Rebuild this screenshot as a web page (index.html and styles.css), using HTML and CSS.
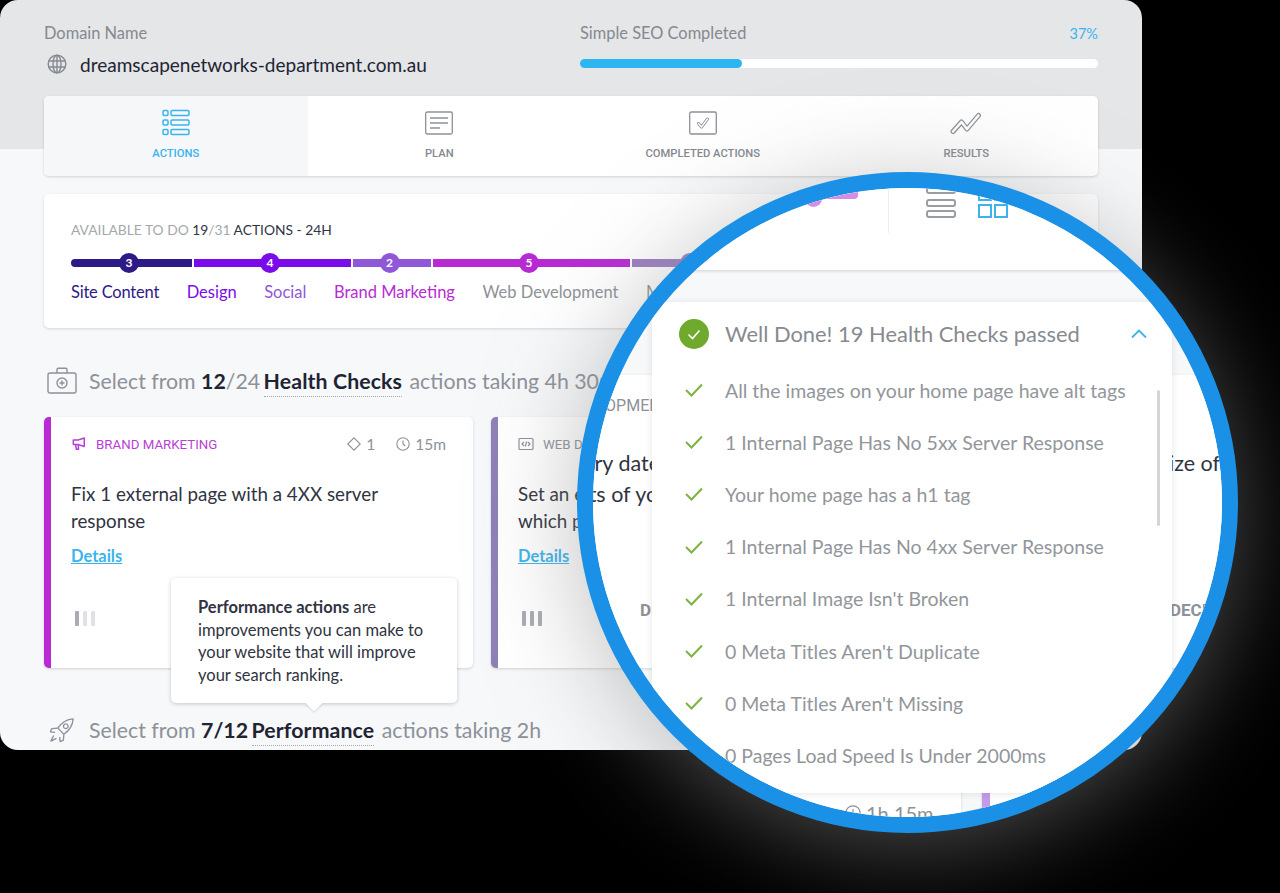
FILE: index.html
```html
<!DOCTYPE html>
<html lang="en">
<head>
    <meta charset="UTF-8">
    <meta name="viewport" content="width=device-width, initial-scale=1.0">
    <title>Simple SEO Actions</title>
    <link rel="stylesheet" href="styles.css">
</head>
<body>
    <div class="app">
        <header class="head">
            <div>
                <div class="head-label">Domain Name</div>
                <div class="domain">
                    <svg class="globe" viewBox="0 0 20 20" fill="none" stroke="#85898f" stroke-width="1.4"><circle cx="10" cy="10" r="8.8"/><ellipse cx="10" cy="10" rx="4" ry="8.8"/><path d="M1.6 7h16.8M1.6 13h16.8M10 1v18"/></svg>
                    <span>dreamscapenetworks-department.com.au</span>
                </div>
            </div>
            <div>
                <div class="progress-top">
                    <span class="head-label">Simple SEO Completed</span>
                    <span class="percent">37%</span>
                </div>
                <div class="progress"><div class="progress-fill" style="width: 31.3%"></div></div>
            </div>
        </header>

        <nav class="tabs">
            <div class="tab active">
                <svg viewBox="0 0 28 28" fill="none" stroke="#3bb4ec" stroke-width="1.5"><rect x="1" y="1.5" width="5" height="5" rx="1.2"/><rect x="9" y="1.5" width="18" height="5" rx="1.2"/><rect x="1" y="11" width="5" height="5" rx="1.2"/><rect x="9" y="11" width="18" height="5" rx="1.2"/><rect x="1" y="20.5" width="5" height="5" rx="1.2"/><rect x="9" y="20.5" width="18" height="5" rx="1.2"/></svg>
                <span>ACTIONS</span>
            </div>
            <div class="tab">
                <svg viewBox="0 0 28 28" fill="none" stroke="#8d9198" stroke-width="1.3"><rect x="0.7" y="3" width="26.6" height="22" rx="1.5"/><path d="M5 9h18M5 14h18M5 19h10"/></svg>
                <span>PLAN</span>
            </div>
            <div class="tab">
                <svg viewBox="0 0 28 28" fill="none" stroke="#8d9198" stroke-width="1.3"><rect x="0.7" y="3" width="26.6" height="22" rx="1.5"/><path d="M9.500 14.500l3 3.500 6-8" stroke-width="3" stroke-linecap="round" stroke-linejoin="round"/><path d="M9.500 14.500l3 3.500 6-8" stroke="#fff" stroke-width="1.400" stroke-linecap="round" stroke-linejoin="round"/></svg>
                <span>COMPLETED ACTIONS</span>
            </div>
            <div class="tab">
                <svg viewBox="0 0 32 28" fill="none" stroke-linecap="round" stroke-linejoin="round"><path d="M3 22.500L11.500 13l5.500 7L28.500 6.500" stroke="#8d9198" stroke-width="5"/><path d="M3 22.500L11.500 13l5.500 7L28.500 6.500" stroke="#fff" stroke-width="2.600"/></svg>
                <span>RESULTS</span>
            </div>
        </nav>

        <section class="summary">
            <p class="summary-text">AVAILABLE TO DO <b>19</b>/31 <b>ACTIONS - 24H</b></p>
            <div class="segments">
                <div class="seg seg-content"><span>3</span></div>
                <div class="seg seg-design"><span>4</span></div>
                <div class="seg seg-social"><span>2</span></div>
                <div class="seg seg-brand"><span>5</span></div>
                <div class="seg seg-web"><span>2</span></div>
            </div>
            <div class="seg-labels">
                <span class="lbl-content">Site Content</span>
                <span class="lbl-design">Design</span>
                <span class="lbl-social">Social</span>
                <span class="lbl-brand">Brand Marketing</span>
                <span class="lbl-web">Web Development</span>
                <span class="lbl-web">Monitoring</span>
            </div>
        </section>

        <h2 class="section-title">
            <svg viewBox="0 0 30 28" fill="none" stroke="#8d9198" stroke-width="1.4"><rect x="1" y="6" width="28" height="20" rx="2"/><path d="M10 6V2.500c0-.8.6-1.300 1.300-1.300h7.400c.7 0 1.300.5 1.300 1.300V6"/><circle cx="15" cy="16" r="5"/><path d="M15 13.500v5M12.500 16h5"/></svg>
            <span>Select from <b>12</b>/24 <b class="dotted">Health Checks</b> actions taking 4h 30m</span>
        </h2>

        <div class="cards">
            <article class="card card-brand">
                <div class="card-meta">
                    <span class="card-tag tag-brand">
                        <svg viewBox="0 0 16 16" fill="none" stroke="#b83fd6" stroke-width="1.700" stroke-linejoin="round"><path d="M1.500 3.500h5.500L14 1.200v9.600L7 8.500H1.500zM4 8.500l1 5.500h2.500L7 8.500"/></svg>
                        BRAND MARKETING
                    </span>
                    <span class="card-stats">
                        <svg viewBox="0 0 14 14" fill="none" stroke="#8d9198" stroke-width="1.100"><path d="M7 .8L13.200 7 7 13.200.8 7z"/></svg>
                        <span>1</span>
                        <svg class="clock" viewBox="0 0 14 14" fill="none" stroke="#8d9198" stroke-width="1.100"><circle cx="7" cy="7" r="6.200"/><path d="M7 3.500V7l2.200 2"/></svg>
                        <span>15m</span>
                    </span>
                </div>
                <h3 class="card-title">Fix 1 external page with a 4XX server response</h3>
                <a class="details">Details</a>
                <div class="levels"><i class="on"></i><i></i><i></i></div>
            </article>
            <article class="card card-web">
                <div class="card-meta">
                    <span class="card-tag tag-web">
                        <svg viewBox="0 0 16 14" fill="none" stroke="#8d9198" stroke-width="1.2"><rect x="1" y="1.500" width="14" height="11" rx="1"/><path d="M6 5L4 7l2 2M10 5l2 2-2 2M8.800 4.500l-1.600 5"/></svg>
                        WEB DEVELOPMENT
                    </span>
                </div>
                <h3 class="card-title">Set an expiry date for the assets<br>which pages load</h3>
                <a class="details">Details</a>
                <div class="levels"><i class="on"></i><i class="on"></i><i class="on"></i></div>
            </article>
        </div>

        <h2 class="section-title perf-title">
            <svg viewBox="0 0 28 28" fill="none" stroke="#8d9198" stroke-width="1.400" stroke-linejoin="round"><path d="M26 2c-7 .5-12 3.500-16.500 10l6.500 6.500C22.500 14 25.500 9 26 2z"/><path d="M9.500 12L3 12.500 1.500 16l5 .5M16 18.500l-.5 6.500-3.500 1.500-.5-5M18 7.500a2.500 2.500 0 1 0 .1 0M5 20l-3 6 6-3"/></svg>
            <span>Select from <b>7/12</b> <b class="dotted">Performance</b> actions taking 2h</span>
        </h2>

        <div class="tooltip"><b>Performance actions</b> are improvements you can make to your website that will improve your search ranking.</div>
    </div>

    <div class="magnifier">
        <div class="mag-top">
            <div class="mag-pink"></div>
            <div class="mag-divider"></div>
            <svg class="mag-rows" viewBox="0 0 30 36" fill="none" stroke="#9a9ea4" stroke-width="2"><rect x="1" y="5" width="28" height="6" rx="2"/><rect x="1" y="18" width="28" height="6" rx="2"/><rect x="1" y="29" width="28" height="6" rx="2"/></svg>
            <svg class="mag-grid" viewBox="0 0 30 36" fill="none" stroke="#3bb4ec" stroke-width="2"><rect x="1" y="1" width="12" height="17"/><rect x="17" y="1" width="12" height="17"/><rect x="1" y="23" width="12" height="12"/><rect x="17" y="23" width="12" height="12"/></svg>
        </div>
        <div class="mag-card mag-card-left">
            <span class="frag frag-caps frag-opme">DEVELOPMENT</span>
            <span class="frag frag-title frag-iry">Set an expiry date</span>
            <span class="frag frag-title frag-ts">the assets of your</span>
            <span class="frag frag-bold frag-d">DIFFICULTY</span>
        </div>
        <div class="mag-card mag-card-right">
            <span class="frag frag-title frag-size">the size of</span>
            <span class="frag frag-bold frag-deci">DECIDE</span>
        </div>
        <div class="mag-card mag-card-under">
            <svg class="frag frag-clock" viewBox="0 0 16 16" fill="none" stroke="#8d9198" stroke-width="1.200"><circle cx="8" cy="8" r="7.200"/><path d="M8 4v4l2.500 2.200"/></svg>
            <span class="frag frag-time">1h 15m</span>
        </div>
        <div class="mag-card mag-card-next"></div>

        <div class="panel">
            <div class="panel-head">
                <svg class="panel-ok" viewBox="0 0 30 30"><circle cx="15" cy="15" r="15" fill="#6fa92e"/><path d="M9.500 15.500l4 4 7-8" fill="none" stroke="#fff" stroke-width="1.600"/></svg>
                <span class="panel-title">Well Done! 19 Health Checks passed</span>
                <svg class="panel-chevron" viewBox="0 0 16 10" fill="none" stroke="#3bb4ec" stroke-width="1.800"><path d="M1 8.500l7-7 7 7"/></svg>
            </div>
            <ul class="checks">
                <li><svg viewBox="0 0 18 14" fill="none" stroke="#7cb342" stroke-width="2"><path d="M1 7l5.500 5.500L17 1.500"/></svg>All the images on your home page have alt tags</li>
                <li><svg viewBox="0 0 18 14" fill="none" stroke="#7cb342" stroke-width="2"><path d="M1 7l5.500 5.500L17 1.500"/></svg>1 Internal Page Has No 5xx Server Response</li>
                <li><svg viewBox="0 0 18 14" fill="none" stroke="#7cb342" stroke-width="2"><path d="M1 7l5.500 5.500L17 1.500"/></svg>Your home page has a h1 tag</li>
                <li><svg viewBox="0 0 18 14" fill="none" stroke="#7cb342" stroke-width="2"><path d="M1 7l5.500 5.500L17 1.500"/></svg>1 Internal Page Has No 4xx Server Response</li>
                <li><svg viewBox="0 0 18 14" fill="none" stroke="#7cb342" stroke-width="2"><path d="M1 7l5.500 5.500L17 1.500"/></svg>1 Internal Image Isn't Broken</li>
                <li><svg viewBox="0 0 18 14" fill="none" stroke="#7cb342" stroke-width="2"><path d="M1 7l5.500 5.500L17 1.500"/></svg>0 Meta Titles Aren't Duplicate</li>
                <li><svg viewBox="0 0 18 14" fill="none" stroke="#7cb342" stroke-width="2"><path d="M1 7l5.500 5.500L17 1.500"/></svg>0 Meta Titles Aren't Missing</li>
                <li><svg viewBox="0 0 18 14" fill="none" stroke="#7cb342" stroke-width="2"><path d="M1 7l5.500 5.500L17 1.500"/></svg>0 Pages Load Speed Is Under 2000ms</li>
            </ul>
            <div class="scrollbar"></div>
        </div>
    </div>
</body>
</html>
```

FILE: styles.css
```css
html, body {
    margin: 0;
    height: 893px;
    overflow: hidden;
    background: #000;
}
body {
    position: relative;
    font-family: Lato, "Liberation Sans", sans-serif;
    color: #30343f;
}
b {
    font-weight: 700;
}

.app {
    position: relative;
    box-sizing: border-box;
    width: 1142px;
    height: 750px;
    padding: 0 44px;
    overflow: hidden;
    border-radius: 18px;
    background: linear-gradient(#e4e6e8 149px, #f6f8fa 149px);
}

/* header */
.head {
    display: grid;
    grid-template-columns: 536px 1fr;
    padding-top: 23px;
}
.head-label {
    font-size: 16.4px;
    line-height: 20px;
    color: #85898f;
}
.domain {
    display: flex;
    align-items: center;
    gap: 13px;
    height: 24px;
    margin-top: 9px;
    font-size: 19.050px;
    color: #1f2433;
}
.globe {
    width: 20px;
    height: 20px;
    margin-left: 3px;
}
.progress-top {
    display: flex;
    justify-content: space-between;
    align-items: center;
    height: 20px;
}
.percent {
    font-size: 14.500px;
    color: #3bb4ec;
}
.progress {
    height: 9px;
    margin-top: 16px;
    border-radius: 5px;
    background: #fff;
}
.progress-fill {
    height: 100%;
    border-radius: 5px;
    background: #2cb5ee;
}

/* tabs */
.tabs {
    display: flex;
    height: 80px;
    margin-top: 20px;
    overflow: hidden;
    border-radius: 5px;
    background: #fff;
    box-shadow: 0 1px 3px rgba(0, 0, 0, 0.16);
}
.tab {
    flex: 1;
    display: flex;
    flex-direction: column;
    align-items: center;
    padding-top: 13px;
    font-family: Roboto, sans-serif;
    font-size: 11.2px;
    font-weight: 500;
    line-height: 12px;
    color: #85898f;
}
.tab svg {
    width: 28px;
    height: 28px;
    margin-bottom: 11px;
}
.tab:last-child svg {
    width: 32px;
}
.tab.active {
    background: #f5f7f9;
    color: #3bb4ec;
}

/* summary */
.summary {
    box-sizing: border-box;
    height: 134px;
    margin-top: 18px;
    padding: 28px 27px 0;
    overflow: hidden;
    border-radius: 5px;
    background: #fff;
    box-shadow: 0 1px 3px rgba(0, 0, 0, 0.14);
}
.summary-text {
    margin: 0;
    font-size: 13.8px;
    line-height: 16px;
    color: #a4a8ad;
}
.summary-text b {
    font-weight: 400;
    color: #30343f;
}
.segments {
    display: flex;
    align-items: center;
    gap: 2px;
    height: 20px;
    margin-top: 15px;
}
.seg {
    box-sizing: border-box;
    flex: none;
    display: flex;
    justify-content: center;
    align-items: center;
    height: 8px;
    padding-right: 5px;
}
.seg span {
    flex: none;
    width: 20px;
    height: 20px;
    border-radius: 50%;
    background: inherit;
    color: #fff;
    font-size: 12px;
    font-weight: 700;
    line-height: 20px;
    text-align: center;
}
.seg-content { width: 121px; background: #2e1a87; border-radius: 4px 0 0 4px; }
.seg-design { width: 157px; background: #7a0bea; }
.seg-social { width: 78px; background: #8e58d8; }
.seg-brand { width: 197px; background: #b82bd4; }
.seg-web { width: 120px; background: #9a80c0; }
.seg-labels {
    display: flex;
    gap: 27.5px;
    margin-top: 9px;
    font-size: 16.5px;
    line-height: 20px;
    white-space: nowrap;
}
.lbl-content { color: #2e1a87; letter-spacing: -0.2px; }
.lbl-design { color: #7a0bea; }
.lbl-social { color: #8e58d8; }
.lbl-brand { color: #b82bd4; }
.lbl-web { color: #8d9198; }

/* sections */
.section-title {
    display: flex;
    align-items: center;
    gap: 12px;
    height: 30px;
    margin: 38px 0 0 3px;
    font-size: 21.3px;
    font-weight: 400;
    color: #8d9198;
    white-space: nowrap;
}
.section-title svg {
    flex: none;
    width: 30px;
    height: 28px;
}
.section-title span {
    padding-bottom: 1px;
}
.section-title b {
    color: #1f2433;
}
.dotted {
    margin: 0 2px 0 -2px;
    padding-bottom: 2px;
    border-bottom: 1px dotted #a4a8ad;
    letter-spacing: 0.1px;
}
.perf-title {
    margin-top: 47px;
    margin-left: 5px;
    gap: 14px;
}
.perf-title svg {
    width: 26px;
}

/* cards */
.cards {
    display: flex;
    gap: 18px;
    margin-top: 21px;
}
.card {
    box-sizing: border-box;
    flex: none;
    width: 429px;
    height: 251px;
    padding: 18px 27px 0 20px;
    border-left: 7px solid;
    border-radius: 5px;
    background: #fff;
    box-shadow: 0 1px 3px rgba(0, 0, 0, 0.16);
}
.card-brand { border-color: #b82bd4; }
.card-web { border-color: #8f80b8; }
.card-meta {
    display: flex;
    justify-content: space-between;
    align-items: center;
    height: 18px;
}
.card-tag {
    display: flex;
    align-items: center;
    gap: 9px;
    font-family: Roboto, sans-serif;
    font-size: 13.3px;
}
.card-tag svg {
    width: 16px;
    height: 14px;
}
.tag-brand { color: #b83fd6; }
.tag-web { color: #8d9198; }
.card-stats {
    display: flex;
    align-items: center;
    gap: 5px;
    font-size: 15.5px;
    color: #8d9198;
}
.card-stats svg {
    width: 14px;
    height: 14px;
}
.card-stats .clock {
    margin-left: 16px;
}
.card-title {
    margin: 27px 0 0;
    font-size: 18.8px;
    font-weight: 400;
    line-height: 27px;
    color: #30343f;
}
.details {
    display: block;
    margin-top: 12px;
    font-size: 16.5px;
    font-weight: 700;
    line-height: 20px;
    color: #3bb4ec;
    text-decoration: underline;
}
.levels {
    display: flex;
    gap: 4px;
    height: 15px;
    margin: 45px 0 0 4px;
}
.levels i {
    width: 4px;
    border-radius: 1px;
    background: #dfe1e4;
}
.levels i.on {
    background: #a9adb2;
}

/* tooltip */
.tooltip {
    position: absolute;
    left: 171px;
    top: 578px;
    box-sizing: border-box;
    width: 286px;
    height: 125px;
    padding: 18px 27px;
    border-radius: 5px;
    background: #fff;
    box-shadow: 0 1px 4px rgba(0, 0, 0, 0.2);
    font-size: 16.5px;
    line-height: 22.5px;
    color: #30343f;
}
.tooltip::after {
    content: "";
    position: absolute;
    left: 137px;
    bottom: -6px;
    width: 12px;
    height: 12px;
    background: #fff;
    transform: rotate(45deg);
    box-shadow: 1px 1px 2px rgba(0, 0, 0, 0.12);
}

/* magnifier */
.magnifier {
    position: absolute;
    left: 577px;
    top: 172px;
    box-sizing: border-box;
    width: 661px;
    height: 661px;
    overflow: hidden;
    border: 16px solid #1a91e6;
    border-radius: 50%;
    background: #f6f8fa;
    box-shadow: 0 14px 100px rgba(140, 140, 140, 0.55);
}
.mag-top {
    position: absolute;
    inset: 0 0 auto 0;
    height: 82px;
    background: #fff;
    box-shadow: 0 1px 3px rgba(0, 0, 0, 0.16);
}
.mag-pink {
    position: absolute;
    left: 216px;
    top: 0;
    width: 49px;
    height: 11px;
    border-radius: 0 0 4px 0;
    background: #d38de6;
}
.mag-pink::before {
    content: "";
    position: absolute;
    left: -4px;
    top: 2px;
    width: 17px;
    height: 17px;
    border-radius: 50%;
    background: #d38de6;
}
.mag-divider {
    position: absolute;
    left: 295px;
    top: 0;
    height: 45px;
    border-left: 1px solid #eceef0;
}
.mag-rows,
.mag-grid {
    position: absolute;
    top: -6px;
    width: 30px;
    height: 36px;
}
.mag-rows { left: 333px; }
.mag-grid { left: 385px; }

.mag-card {
    position: absolute;
    background: #fff;
    box-shadow: 0 1px 3px rgba(0, 0, 0, 0.14);
}
.mag-card-left { left: 0; top: 187px; width: 80px; height: 293px; }
.mag-card-right { left: 560px; top: 187px; width: 80px; height: 293px; }
.mag-card-under { left: 100px; top: 560px; width: 268px; height: 100px; }
.mag-card-next { left: 389px; top: 560px; width: 200px; height: 100px; border-left: 8px solid #c59ae6; }
.frag {
    position: absolute;
    white-space: nowrap;
}
.frag-title {
    font-size: 21.500px;
    color: #30343f;
}
.frag-caps {
    font-family: Roboto, sans-serif;
    font-size: 16px;
    color: #8d9198;
}
.frag-bold {
    font-family: Roboto, sans-serif;
    font-size: 17px;
    font-weight: 700;
    color: #8d9198;
}
.frag-opme { right: 3px; top: 21px; }
.frag-iry { right: 13px; top: 75px; }
.frag-ts { right: -5px; top: 106px; }
.frag-d { left: 47px; top: 225px; }
.frag-size { right: 13px; top: 75px; }
.frag-deci { left: 17px; top: 225px; }
.frag-clock { left: 152px; top: 57px; width: 16px; height: 16px; }
.frag-time { left: 173px; top: 53px; font-size: 20px; color: #8d9198; }

.panel {
    position: absolute;
    left: 59px;
    top: 114px;
    width: 520px;
    height: 491px;
    background: #fff;
    box-shadow: 0 1px 8px rgba(0, 0, 0, 0.1);
}
.panel-head {
    display: flex;
    align-items: center;
    height: 30px;
    padding: 17px 25px 0 27px;
}
.panel-ok {
    flex: none;
    width: 30px;
    height: 30px;
    margin-right: 16px;
}
.panel-title {
    flex: 1;
    padding-bottom: 2px;
    font-size: 21.9px;
    color: #868a90;
}
.panel-chevron {
    width: 16px;
    height: 10px;
}
.checks {
    margin: 15px 0 0;
    padding: 0;
    list-style: none;
}
.checks li {
    display: flex;
    align-items: center;
    height: 52.2px;
    padding-left: 33px;
    font-size: 19.5px;
    color: #92969b;
    white-space: nowrap;
}
.checks svg {
    flex: none;
    width: 18px;
    height: 14px;
    margin-right: 22px;
}
.scrollbar {
    position: absolute;
    left: 505px;
    top: 88px;
    width: 3px;
    height: 136px;
    border-radius: 2px;
    background: #d3d6d9;
}
```
